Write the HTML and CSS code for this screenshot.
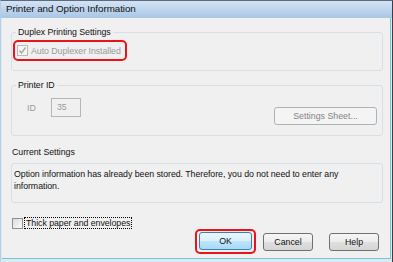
FILE: index.html
```html
<!DOCTYPE html>
<html lang="en">
<head>
    <meta charset="UTF-8">
    <title>Printer and Option Information</title>
    <link rel="stylesheet" href="styles.css">
</head>
<body>
<div class="window">
    <div class="titlebar">Printer and Option Information</div>

    <div class="dialog">
        <div class="group group-duplex">
            <span class="group-title">Duplex Printing Settings</span>
            <div class="mark mark-check">
                <label class="check disabled">
                    <span class="box"><svg width="9" height="9" viewBox="0 0 9 9"><path d="M1.5 4.5 L3.5 7 L7.5 1.5" fill="none" stroke="#a8a8a8" stroke-width="1.4"/></svg></span>
                    Auto Duplexer Installed
                </label>
            </div>
        </div>

        <div class="group group-printer">
            <span class="group-title">Printer ID</span>
            <div class="id-row">
                <span class="id-label">ID</span>
                <span class="textbox">35</span>
                <button class="btn btn-sheet" disabled>Settings Sheet...</button>
            </div>
        </div>

        <div class="section-label">Current Settings</div>
        <div class="info-box">Option information has already been stored. Therefore, you do not need to enter any information.</div>

        <label class="check thick">
            <span class="box"></span>
            <span class="focus">Thick paper and envelopes</span>
        </label>

        <div class="buttons">
            <div class="mark mark-ok"><button class="btn btn-default">OK</button></div>
            <button class="btn">Cancel</button>
            <button class="btn">Help</button>
        </div>
    </div>
</div>
</body>
</html>
```

FILE: styles.css
```css
* {
    box-sizing: border-box;
}
body {
    margin: 0;
    font-family: "Liberation Sans", Arial, sans-serif;
    font-size: 8.8px;
    letter-spacing: -0.05px;
    color: #111;
    background: #fff;
}
.window {
    width: 393px;
    height: 262px;
    background: #dbe9f4;
    border-top: 1px solid #5d6b7a;
    border-left: 1px solid #b7cde2;
    border-right: 1px solid #3b3f44;
    padding: 0 1px 3px 1px;
}
.titlebar {
    height: 17px;
    line-height: 16px;
    padding-left: 5px;
    font-size: 9.8px;
    background: linear-gradient(#d3e3f4, #a9c6e6);
    margin: 0 -1px;
}
.dialog {
    height: 241px;
    background: #f0f0f0;
    border-right: 1px solid #79c3d6;
    border-bottom: 1px solid #79c3d6;
    padding: 14px 7px 0 9px;
}
.group {
    border: 1px solid #d5dfe5;
    border-radius: 3px;
    padding: 0 0 0 1px;
}
.group-title {
    display: block;
    width: max-content;
    margin: -6px 0 0 3px;
    padding: 0 2px;
    height: 11px;
    line-height: 11px;
    background: #f0f0f0;
}
.group-duplex {
    height: 39px;
}
.group-printer {
    height: 51px;
    margin-top: 14px;
}
.mark {
    border: 2px solid #e8141c;
    border-radius: 5px;
}
.mark-check {
    display: flex;
    width: 114px;
    height: 21px;
    margin-top: 2px;
    padding-left: 2px;
    align-items: center;
}
.check {
    display: flex;
    align-items: center;
    gap: 3px;
}
.check.disabled {
    color: #9a9a9a;
}
.box {
    width: 11px;
    height: 11px;
    border: 1px solid #8f8f8f;
    background: linear-gradient(135deg, #dcdcdc, #fbfbfb);
    display: flex;
    align-items: center;
    justify-content: center;
}
.disabled .box {
    border-color: #b8b8b8;
    background: #f4f4f4;
}
.id-row {
    display: flex;
    align-items: flex-start;
    margin-top: 7px;
}
.id-label {
    color: #9a9a9a;
    margin: 5px 0 0 14px;
    width: 24px;
}
.textbox {
    width: 30px;
    height: 19px;
    line-height: 17px;
    border: 1px solid #b5b5b5;
    padding-left: 5px;
    color: #9a9a9a;
    background: #f0f0f0;
}
.btn {
    font-family: inherit;
    font-size: 8.8px;
    height: 18px;
    padding: 0;
    border: 1px solid #707070;
    border-radius: 3px;
    background: linear-gradient(#f6f6f6 0%, #ececec 50%, #dfdfdf 51%, #d5d5d5 100%);
    color: #111;
    width: 50px;
}
.btn-sheet {
    width: 103px;
    margin: 9px 5px 0 auto;
    border-color: #adb2b5;
    background: #f4f4f4;
    color: #838383;
}
.section-label {
    margin: 11px 0 0 1px;
    height: 11px;
    line-height: 11px;
}
.info-box {
    margin-top: 5px;
    height: 40px;
    border: 1px solid #d5dfe5;
    border-radius: 3px;
    padding: 4px 0 0 2px;
    line-height: 12px;
}
.thick {
    margin: 14px 0 0 1px;
    gap: 1px;
}
.focus {
    border: 1px dotted #000;
    padding: 0 1px;
    line-height: 10px;
}
.buttons {
    display: flex;
    justify-content: flex-end;
    align-items: center;
    gap: 16px;
    margin: 0 4px 0 0;
}
.mark-ok {
    padding: 1px 2px 2px 2px;
    margin-right: -9px;
}
.btn-default {
    width: 53px;
    border-color: #3c7fb1;
    background: linear-gradient(#eaf6fd 0%, #d9f0fc 50%, #bee6fd 51%, #a7d9f5 100%);
}
```
